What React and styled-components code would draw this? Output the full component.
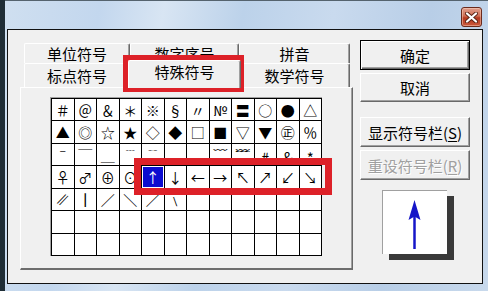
import React from 'react';
import styled, { createGlobalStyle, css } from 'styled-components';

const GlobalStyle = createGlobalStyle`
  html, body {
    margin: 0;
    padding: 0;
    background: #1f2d36;
    overflow: hidden;
  }
  * { box-sizing: border-box; }
`;

const FONT = '"Noto Sans CJK SC", "DejaVu Sans", sans-serif';

const BACK_TABS = [
  { label: '单位符号', width: 106 },
  { label: '数字序号', width: 109 },
  { label: '拼音', width: 111 },
];
const FRONT_TABS = [
  { label: '标点符号', width: 106 },
  { label: '特殊符号', width: 109, active: true },
  { label: '数学符号', width: 111 },
];

const SYMBOLS = [
  ['＃', '＠', '＆', '＊', '※', '§', '〃', '№', '〓', '○', '●', '△'],
  ['▲', '◎', '☆', '★', '◇', '◆', '□', '■', '▽', '▼', '㊣', '％'],
  ['ˉ', '￣', '＿', '﹉', '﹊', '', '', '﹋', '﹌', '﹟', '﹠', '﹡'],
  ['♀', '♂', '⊕', '⊙', '↑', '↓', '←', '→', '↖', '↗', '↙', '↘'],
  ['∥', '∣', '／', '＼', '∕', '﹨', '', '', '', '', '', ''],
  ['', '', '', '', '', '', '', '', '', '', '', ''],
  ['', '', '', '', '', '', '', '', '', '', '', ''],
];

// small-form glyphs are drawn tiny in the font, enlarge them a bit
const GLYPH_SIZE = { '﹟': 18, '﹠': 18, '﹡': 18, '∣': 19 };

export default function App() {
  return (
    <>
      <GlobalStyle />
      <Window>
        <TitleBar>
          <CloseButton aria-label="关闭">
            <svg width="13" height="11" viewBox="0 0 13 11">
              <path d="M2 1.5 L11 9.5 M11 1.5 L2 9.5" stroke="#5a2416" strokeWidth="4" strokeLinecap="round" />
              <path d="M2 1.5 L11 9.5 M11 1.5 L2 9.5" stroke="#fff" strokeWidth="2.2" strokeLinecap="round" />
            </svg>
          </CloseButton>
        </TitleBar>
        <Client>
          <TabControl>
            <TabRow>
              {BACK_TABS.map((t) => (
                <Tab key={t.label} $width={t.width} $h={20}>{t.label}</Tab>
              ))}
            </TabRow>
            <TabRow>
              {FRONT_TABS.map((t) => (
                <Tab key={t.label} $width={t.width} $h={24} $active={t.active}>{t.label}</Tab>
              ))}
            </TabRow>
            <Panel>
              <GridFrame>
                <SymbolGrid>
                  {SYMBOLS.flatMap((row, r) => row.map((s, c) => (
                    <Cell key={`${r}-${c}`} $selected={r === 3 && c === 4}>
                      <Glyph $slant={s === '∥'} $size={GLYPH_SIZE[s]}>{s}</Glyph>
                    </Cell>
                  )))}
                </SymbolGrid>
              </GridFrame>
            </Panel>
          </TabControl>

          <Side>
            <Button $default>确定</Button>
            <Button $h={29} $mt={3}>取消</Button>
            <Button $mt={15}>显示符号栏(<u>S</u>)</Button>
            <Button $mt={3} disabled>重设符号栏(<u>R</u>)</Button>
            <Preview>
              <svg width="65" height="64" viewBox="0 0 65 64">
                <line x1="31.5" y1="24" x2="31.5" y2="58" stroke="#1616c8" strokeWidth="2.5" />
                <path d="M31.5 9 L37.5 29 L31.5 25.5 L25.5 29 Z" fill="#1616c8" />
              </svg>
            </Preview>
          </Side>

          <Marker style={{ left: 115, top: 25, width: 121, height: 37 }} />
          <Marker style={{ left: 126, top: 128, width: 198, height: 37 }} />
        </Client>
      </Window>
    </>
  );
}

const Window = styled.div`
  margin-left: 5px;
  width: 483px;
  height: 291px;
  border-top: 1px solid #55636e;
  background: linear-gradient(100deg, #cfdff0 0%, #c3d7ee 18%, #d8e5f3 30%, #bcd2ea 45%, #c9daee 62%, #b8cee7 80%, #c8d9ec 100%);
  font-family: ${FONT};
`;

const TitleBar = styled.div`
  height: 28px;
  display: flex;
  justify-content: flex-end;
  align-items: flex-start;
  padding: 6px 6px 0 0;
`;

const CloseButton = styled.div`
  width: 21px;
  height: 20px;
  border: 1px solid #6b2a1c;
  border-radius: 3px;
  background: linear-gradient(#e0a08e 0%, #cf6c52 45%, #b5391f 55%, #c9583c 100%);
  box-shadow: inset 0 0 0 1px rgba(255, 220, 200, 0.45);
  display: flex;
  align-items: center;
  justify-content: center;
`;

const Client = styled.div`
  position: relative;
  margin-left: 2px;
  width: 476px;
  height: 255px;
  border: 1px solid #111;
  background: #f0f0f0;
  padding: 10px 0 0 12px;
  display: flex;
  gap: 7px;
`;

const TabControl = styled.div`
  width: 333px;
  padding-top: 3px;
  display: flex;
  flex-direction: column;
`;

const TabRow = styled.div`
  display: flex;
  padding-left: 4px;
`;

const Tab = styled.div`
  width: ${(p) => p.$width}px;
  height: ${(p) => p.$h}px;
  border-top: 1px solid #fff;
  border-left: 1px solid #fff;
  border-right: 1px solid #696969;
  border-radius: 2px 2px 0 0;
  box-shadow: inset -1px 0 0 #a0a0a0;
  background: #f0f0f0;
  font-size: 15px;
  line-height: 15px;
  color: #000;
  display: flex;
  align-items: center;
  justify-content: center;

  ${(p) => p.$active && css`
    position: relative;
    z-index: 1;
    width: ${p.$width + 4}px;
    height: ${p.$h + 4}px;
    margin: -3px -2px -1px;
    align-items: flex-start;
    padding-top: 3px;
  `}
`;

const Panel = styled.div`
  height: 183px;
  border-top: 1px solid #fff;
  border-left: 1px solid #fff;
  border-right: 1px solid #696969;
  border-bottom: 2px solid #6d6d6d;
  box-shadow: inset -1px 0 0 #a0a0a0;
  padding: 9px 0 0 29px;
`;

const GridFrame = styled.div`
  width: 272px;
  border-top: 1px solid #a0a0a0;
  border-left: 1px solid #a0a0a0;
`;

const SymbolGrid = styled.div`
  width: 271px;
  height: 158px;
  padding: 1px;
  gap: 1px;
  background: #000;
  display: grid;
  grid-template-columns: repeat(12, 1fr);
  grid-template-rows: repeat(7, 1fr);
`;

const Cell = styled.div`
  background: #fff;
  color: #000;
  display: flex;
  align-items: center;
  justify-content: center;
  font-size: 14px;
  line-height: 1;
  min-width: 0;
  min-height: 0;

  ${(p) => p.$selected && css`
    background: #0c0cd0;
    color: #fff;
    box-shadow: inset 0 0 0 1px #fff;
  `}
`;

const Glyph = styled.span`
  display: inline-block;
  line-height: 1;
  font-size: ${(p) => (p.$size ? `${p.$size}px` : 'inherit')};
  ${(p) => p.$slant && css`transform: skewX(-24deg);`}
`;

const Side = styled.div`
  width: 110px;
  display: flex;
  flex-direction: column;
`;

const Button = styled.button`
  width: 110px;
  height: ${(p) => p.$h || 30}px;
  margin-top: ${(p) => p.$mt || 0}px;
  padding: 0;
  font-family: ${FONT};
  font-size: 15px;
  line-height: 15px;
  color: #000;
  background: #f0f0f0;
  border: 1px solid;
  border-color: #fff #696969 #696969 #fff;
  box-shadow: inset -1px -1px 0 #a0a0a0;

  u { text-decoration-thickness: 1px; text-underline-offset: 2px; }

  ${(p) => p.$default && css`
    border: 1px solid #000;
    box-shadow: inset 1px 1px 0 #fff, inset -1px -1px 0 #696969, inset -2px -2px 0 #a0a0a0;
  `}

  &:disabled {
    color: #a0a0a0;
    text-shadow: 1px 1px 0 #fff;
  }
`;

const Preview = styled.div`
  margin: 10px 0 0 22px;
  width: 65px;
  height: 64px;
  background: #fff;
  border-top: 1px solid #a0a0a0;
  border-left: 1px solid #a0a0a0;
  box-shadow: 7px 6px 0 #3a3a3a;
`;

const Marker = styled.div`
  position: absolute;
  border: 7px solid #dd2128;
  pointer-events: none;
`;
